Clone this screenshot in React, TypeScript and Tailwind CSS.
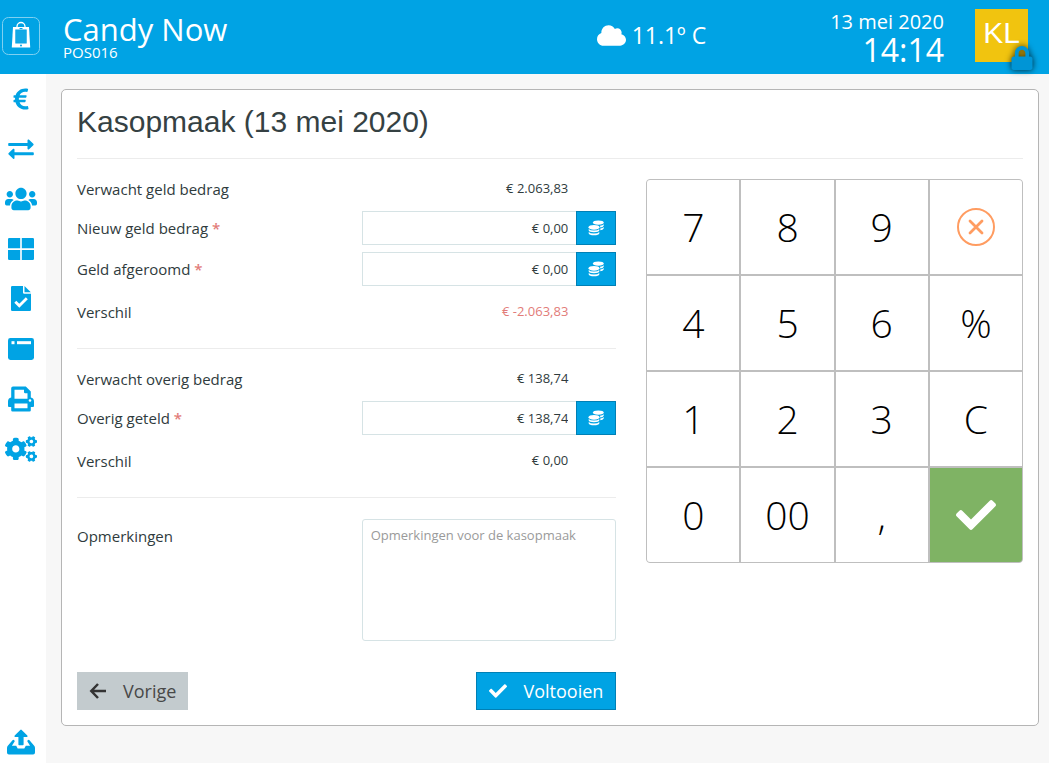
import type { ReactNode } from "react";
import { FaCheck, FaCloud, FaCogs, FaEuroSign, FaLock, FaUsers } from "react-icons/fa";

function BagLogo() {
  return (
    <svg viewBox="0 0 38 38" className="size-[38px]" aria-hidden="true">
      <rect x="0.5" y="0.5" width="37" height="37" rx="6" fill="none" stroke="#7fd0f1" />
      <path d="M15 10v-.5a4 4 0 0 1 8 0v.5" fill="none" stroke="#fff" strokeWidth="1.300" />
      <path d="M11 10h16l1.200 20.500H9.800z" fill="#fff" />
      <rect x="13.300" y="12.500" width="11.400" height="14" fill="#00a3e4" />
      <rect x="14" y="13.200" width="10" height="12.600" fill="#12a9e6" />
      <rect x="17.500" y="11" width="3" height="1" fill="#00a3e4" />
      <circle cx="19" cy="28.500" r="1" fill="#00a3e4" />
    </svg>
  );
}

function ExchangeIcon() {
  return (
    <svg viewBox="0 0 26 20" className="h-5 w-[26px]" fill="currentColor" aria-hidden="true">
      <path d="M1 4h18.500V1.400c0-.9 1-1.300 1.600-.7l4.200 4c.5.500.5 1.100 0 1.600l-4.200 4c-.6.600-1.600.2-1.600-.7V7H1c-.500 0-.800-.300-.800-.800V4.800C.200 4.300.500 4 1 4z" />
      <path d="M25 13.300H6.500v-2.600c0-.900-1-1.300-1.600-.7l-4.200 4c-.5.500-.5 1.100 0 1.600l4.200 4c.6.600 1.600.2 1.600-.7v-2.600H25c.5 0 .8-.3.8-.8v-1.400c0-.5-.3-.8-.8-.8z" />
    </svg>
  );
}

function TilesIcon() {
  return (
    <svg viewBox="0 0 26 22" className="h-[22px] w-[26px]" fill="currentColor" aria-hidden="true">
      <path d="M1.200 0H12.200v10.300H0V1.200Q0 0 1.200 0zM13.800 0h11q1.200 0 1.200 1.200v9.100H13.800zM0 11.900h12.200V22h-11Q0 22 0 20.800zM13.800 11.900H26v8.900q0 1.200-1.200 1.200h-11z" />
    </svg>
  );
}

function FileCheckIcon() {
  return (
    <svg viewBox="0 0 20 25" className="h-[25px] w-5" fill="currentColor" aria-hidden="true">
      <path d="M1.200 0H12v6.500q0 1.300 1.300 1.300H20v16q0 1.200-1.200 1.200H1.200Q0 25 0 23.800V1.200Q0 0 1.200 0z" />
      <path d="M13.500 0l6.300 6.200h-6.300z" />
      <path d="M4.300 15.800l4 4 7.500-7.500" fill="none" stroke="#fff" strokeWidth="2.800" />
    </svg>
  );
}

function WindowIcon() {
  return (
    <svg viewBox="0 0 26 22" className="h-[22px] w-[26px]" aria-hidden="true">
      <rect width="26" height="22" rx="2.400" fill="currentColor" />
      <rect x="3.500" y="3.200" width="3" height="3" fill="#fff" />
      <rect x="9" y="3.200" width="14" height="3" fill="#fff" />
    </svg>
  );
}

function PrinterIcon() {
  return (
    <svg viewBox="0 0 26 26" className="size-[26px]" aria-hidden="true">
      <path
        fill="currentColor"
        fillRule="evenodd"
        d="M3.200 2.300Q3.200.5 5 .5h12.800l5 5V11.500q3.200.6 3.200 4V20q0 1-1 1h-2.200v3.200q0 1.300-1.300 1.300h-17Q3.200 25.500 3.200 24.200V21H1q-1 0-1-1v-4.500q0-3.400 3.200-4zM6.500 3.700v9h13V7.200h-2.300q-1.200 0-1.200-1.200V3.700zM6.500 17.500v4.800h13v-4.800z"
      />
      <circle cx="22" cy="14.500" r="1.300" fill="#fff" />
    </svg>
  );
}

function OutboxIcon() {
  return (
    <svg viewBox="0 0 28 26" className="h-[26px] w-7" fill="currentColor" aria-hidden="true">
      <path d="M13.300.9q.7-.7 1.400 0l5.600 5.500q1 1.400-.5 1.500h-3.200v7.600q0 .8-.8.8h-3.600q-.8 0-.8-.8V7.900H8.200q-1.500-.1-.5-1.500z" />
      <path d="M5.500 11.200q1-.9 1.800 0 .9.900 0 1.900L4.900 16.800h4.300l1.500 2.800h6.600l1.500-2.800h4.300l-2.400-3.700q-.9-1 0-1.900.8-.9 1.800 0l4.700 5.600q.8 1 .8 2.200v4.600q0 1.900-1.900 1.900H1.900Q0 25.500 0 23.600V19q0-1.200.8-2.200z" />
    </svg>
  );
}

function CoinsIcon() {
  return (
    <svg viewBox="0 0 16 16" className="size-4" aria-hidden="true">
      <g fill="#fff">
        <ellipse cx="10.300" cy="2.600" rx="5.400" ry="2.100" />
        <path d="M12 5.700q2.700-.3 3.700-1.500v1.500Q15 7.200 12.300 7.500zM12.300 8.400q2.400-.3 3.400-1.500v1.600q-.8 1.500-3.400 1.800z" />
        <ellipse cx="6" cy="7.300" rx="5.500" ry="2.400" />
        <path d="M.7 9.100q1.300 1.500 5.300 1.500t5.300-1.500v1.500q-.5 1.700-5.300 1.700T.7 10.600zM.7 11.900q1.300 1.500 5.300 1.500T11.300 11.900v1.500Q10.800 15.200 6 15.200T.7 13.400z" />
      </g>
    </svg>
  );
}

function BackIcon() {
  return (
    <svg viewBox="0 0 18 16" className="h-4 w-[18px]" fill="none" stroke="#333" strokeWidth="2.500" aria-hidden="true">
      <path d="M9 1L2.300 8 9 15M2.500 8H17" />
    </svg>
  );
}

function CancelIcon() {
  return (
    <svg viewBox="0 0 38 38" className="size-[38px]" fill="none" stroke="#ff9c61" aria-hidden="true">
      <circle cx="19" cy="19" r="18" strokeWidth="2" />
      <path d="M13 13l12 12M25 13L13 25" strokeWidth="2.800" strokeLinecap="round" />
    </svg>
  );
}

const navigation: { label: string; icon: ReactNode }[] = [
  { label: "Kassa", icon: <FaEuroSign className="size-6" /> },
  { label: "Transacties", icon: <ExchangeIcon /> },
  { label: "Klanten", icon: <FaUsers className="size-8" /> },
  { label: "Producten", icon: <TilesIcon /> },
  { label: "Rapporten", icon: <FileCheckIcon /> },
  { label: "Lade", icon: <WindowIcon /> },
  { label: "Printer", icon: <PrinterIcon /> },
  { label: "Instellingen", icon: <FaCogs className="size-8" /> },
];

function NavLink({ label, children }: { label: string; children: ReactNode }) {
  return (
    <a href="#" aria-label={label} className="flex h-[50px] w-[42px] items-center justify-center pb-px text-[#00a3e4]">
      {children}
    </a>
  );
}

function ValueRow({ label, value, negative = false }: { label: string; value: string; negative?: boolean }) {
  return (
    <div className="flex h-5 items-center">
      <span className="w-1/2 px-[15px] text-[15px]">{label}</span>
      <span className={negative ? "w-1/2 pr-[63px] text-right text-[13px] text-[#e27c79]" : "w-1/2 pr-[63px] text-right text-[13px]"}>
        {value}
      </span>
    </div>
  );
}

function AmountRow({ id, label, value }: { id: string; label: string; value: string }) {
  return (
    <div className="flex items-center">
      <label htmlFor={id} className="w-1/2 px-[15px] text-[15px]">
        {label} <span className="font-semibold text-[#e27c79]">*</span>
      </label>
      <div className="flex h-[34px] w-1/2 px-[15px]">
        <input
          id={id}
          defaultValue={value}
          className="min-w-0 flex-1 border border-r-0 border-[#d6e3e5] bg-white px-2 pt-[2px] text-right text-[13px]"
        />
        <button
          type="button"
          aria-label={`${label} tellen`}
          className="flex w-10 items-center justify-center border border-[#0080b5] bg-[#00a3e4]"
        >
          <CoinsIcon />
        </button>
      </div>
    </div>
  );
}

function Rule() {
  return <hr className="mx-[15px] border-[#ececec]" />;
}

const keys = ["7", "8", "9", "cancel", "4", "5", "6", "%", "1", "2", "3", "C", "0", "00", ",", "ok"];

function Keypad() {
  return (
    <div className="grid grid-cols-4 gap-[2px] overflow-hidden rounded border border-[#bfbfbf] bg-[#bfbfbf]">
      {keys.map((key) => {
        if (key === "ok") {
          return (
            <button key={key} type="button" aria-label="Bevestigen" className="flex h-[94px] items-center justify-center bg-[#7fb364] text-white">
              <FaCheck className="size-10" />
            </button>
          );
        }
        return (
          <button
            key={key}
            type="button"
            aria-label={key === "cancel" ? "Wissen" : key}
            className="flex h-[94px] items-center justify-center bg-white text-[39px] font-light text-black"
          >
            {key === "cancel" ? <CancelIcon /> : key}
          </button>
        );
      })}
    </div>
  );
}

export default function App() {
  return (
    <div className="flex min-h-screen flex-col bg-[#f7f7f7] font-['Open_Sans',sans-serif] text-[#2f3b3d]">
      <header className="flex h-[74px] items-start bg-[#00a3e4] text-white">
        <a href="#" aria-label="Start" className="ml-[2px] mt-[17px]">
          <BagLogo />
        </a>
        <div className="ml-[23px] mt-[11px] flex-1">
          <div className="text-[31px] leading-9">Candy Now</div>
          <div className="text-[15px] leading-[10px]">POS016</div>
        </div>
        <div className="mt-5 flex items-center gap-[6px] text-[23px] leading-[30px]">
          <FaCloud className="size-[29px]" />
          11.1º C
        </div>
        <div className="ml-[124px] mt-[8px] text-right">
          <div className="text-[20px] leading-[27px]">13 mei 2020</div>
          <div className="text-[32px] leading-[30px]">14:14</div>
        </div>
        <button
          type="button"
          aria-label="Vergrendelen"
          className="relative ml-[31px] mr-[21px] mt-[9px] flex size-[53px] justify-center bg-[#f1c40f] pt-[9px] font-['Liberation_Sans',sans-serif] text-[30px] leading-[30px]"
        >
          KL
          <FaLock className="absolute -bottom-[8px] -right-[6px] size-6 text-[#0095d6] drop-shadow-[0_0_3px_rgba(0,0,0,0.8)]" />
        </button>
      </header>

      <div className="flex flex-1">
        <nav className="flex w-[46px] flex-col bg-white">
          {navigation.map((item) => (
            <NavLink key={item.label} label={item.label}>
              {item.icon}
            </NavLink>
          ))}
          <div className="mt-auto flex h-[42px] items-center">
            <NavLink label="Afmelden">
              <OutboxIcon />
            </NavLink>
          </div>
        </nav>

        <main className="flex-1 pb-[37px] pl-[15px] pr-[10px] pt-[15px]">
          <section className="rounded-[5px] border border-[#b5b5b5] bg-white pb-[15px]">
            <h1 className="px-[15px] pb-[12px] pt-[12px] font-['Liberation_Sans',sans-serif] text-[30px] leading-[40px] text-[#354143]">
              Kasopmaak (13 mei 2020)
            </h1>
            <div className="pt-1">
              <Rule />
            </div>
            <div className="flex items-start pt-5">
              <form className="w-7/12">
                <div className="flex flex-col pb-[26px]">
                  <ValueRow label="Verwacht geld bedrag" value="€ 2.063,83" />
                  <div className="flex flex-col gap-[7px] pb-4 pt-3">
                    <AmountRow id="nieuw-geld" label="Nieuw geld bedrag" value="€ 0,00" />
                    <AmountRow id="geld-afgeroomd" label="Geld afgeroomd" value="€ 0,00" />
                  </div>
                  <ValueRow label="Verschil" value="€ -2.063,83" negative />
                </div>
                <Rule />
                <div className="flex flex-col pb-[26px] pt-5">
                  <ValueRow label="Verwacht overig bedrag" value="€ 138,74" />
                  <div className="pb-4 pt-3">
                    <AmountRow id="overig-geteld" label="Overig geteld" value="€ 138,74" />
                  </div>
                  <ValueRow label="Verschil" value="€ 0,00" />
                </div>
                <Rule />
                <div className="flex items-start pt-[21px]">
                  <label htmlFor="opmerkingen" className="w-1/2 px-[15px] pt-[7px] text-[15px] leading-5">
                    Opmerkingen
                  </label>
                  <div className="flex w-1/2 px-[15px]">
                    <textarea
                      id="opmerkingen"
                      placeholder="Opmerkingen voor de kasopmaak"
                      className="h-[122px] w-full resize-none rounded-[3px] border border-[#d6e3e5] px-2 py-[5px] text-[13px] leading-5 placeholder:text-[#9a9a9a]"
                    />
                  </div>
                </div>
                <div className="flex justify-between px-[15px] pt-[31px]">
                  <button type="button" className="flex h-[38px] items-center gap-4 bg-[#c3cbce] px-3 text-[18px] text-[#484848]">
                    <BackIcon />
                    Vorige
                  </button>
                  <button type="submit" className="flex h-[38px] items-center gap-4 border border-[#0080b5] bg-[#00a3e4] px-3 text-[18px] text-white">
                    <FaCheck className="size-[18px]" />
                    Voltooien
                  </button>
                </div>
              </form>
              <div className="w-5/12 px-[15px]">
                <Keypad />
              </div>
            </div>
          </section>
        </main>
      </div>
    </div>
  );
}
